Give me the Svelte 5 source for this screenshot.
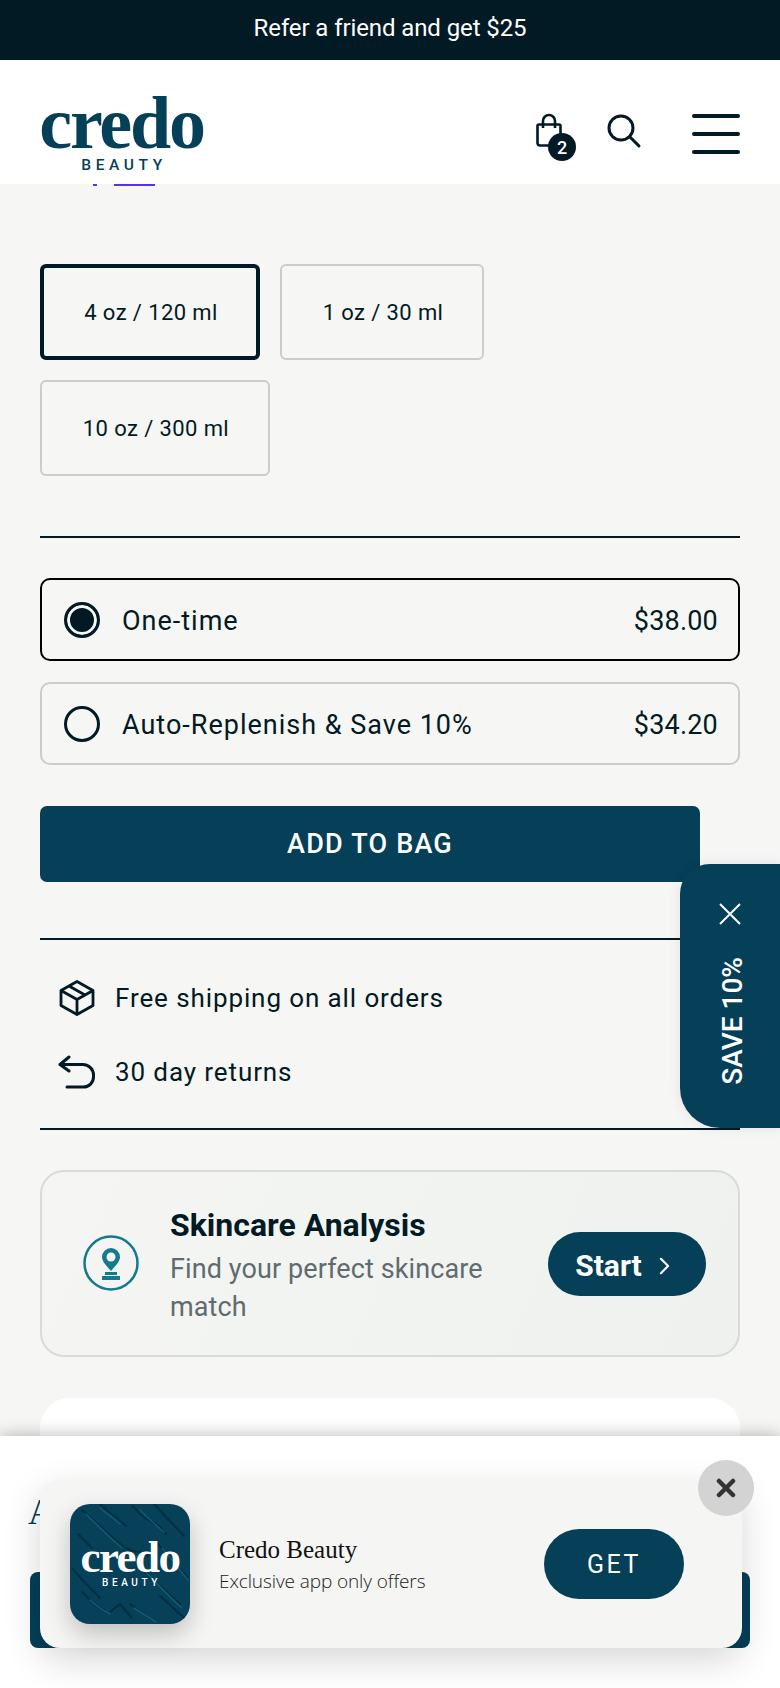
<script>
  const sizes = [
    { label: '4 oz / 120 ml', cls: 's1 selected' },
    { label: '1 oz / 30 ml', cls: 's2' },
    { label: '10 oz / 300 ml', cls: 's3' }
  ];
  const plans = [
    { label: 'One-time', price: '$38.00', active: true },
    { label: 'Auto-Replenish & Save 10%', price: '$34.20', active: false }
  ];
</script>

<div class="page">
  <div class="promo">Refer a friend and get $25</div>

  <header>
    <div class="logo">
      <span class="word">credo</span>
      <span class="sub">BEAUTY</span>
    </div>
    <div class="actions">
      <div class="bag">
        <svg width="32" height="36" viewBox="0 0 32 36" fill="none" stroke="#021a24" stroke-width="2.6">
          <path d="M4 11.5h20a1.5 1.5 0 0 1 1.5 1.5v17a2.5 2.5 0 0 1-2.5 2.5H5A2.5 2.5 0 0 1 2.5 30V13A1.5 1.5 0 0 1 4 11.5z" />
          <path d="M8 15V8a6 6 0 0 1 12 0v7" />
        </svg>
        <span class="badge">2</span>
      </div>
      <svg class="search" width="36" height="36" viewBox="0 0 36 36" fill="none" stroke="#021a24" stroke-width="3" stroke-linecap="round">
        <circle cx="15" cy="15" r="12" />
        <path d="M24 24l9 9" />
      </svg>
      <div class="burger"><i></i><i></i><i></i></div>
    </div>
  </header>

  <main>
    <div class="peek"><i></i><b></b></div>

    <div class="sizes">
      {#each sizes as s}
        <div class="size {s.cls}">{s.label}</div>
      {/each}
    </div>

    <hr class="rule first" />

    <div class="plans">
      {#each plans as p}
        <div class="plan" class:active={p.active}>
          <span class="radio" class:on={p.active}></span>
          <span class="plan-label">{p.label}</span>
          <span class="price">{p.price}</span>
        </div>
      {/each}
    </div>

    <button class="add">ADD TO BAG</button>

    <hr class="rule second" />

    <div class="perks">
      <div class="perk">
        <svg width="38" height="36" viewBox="0 0 38 36" fill="none" stroke="#021a24" stroke-width="2.8" stroke-linejoin="round">
          <path d="M19 1.5 35 10.5v15L19 34.5 3 25.5v-15z" />
          <path d="M3 10.5 19 19.5 35 10.5M19 19.5v15M11 6l16 9" />
        </svg>
        <span>Free shipping on all orders</span>
      </div>
      <div class="perk">
        <svg width="38" height="34" viewBox="0 0 38 34" fill="none" stroke="#021a24" stroke-width="3" stroke-linecap="round" stroke-linejoin="round">
          <path d="M11 2 2 9.5 11 16" />
          <path d="M3 9.5h22a10.5 10.5 0 0 1 10.5 10.5v2A10 10 0 0 1 25.5 32H9" />
        </svg>
        <span>30 day returns</span>
      </div>
    </div>

    <hr class="rule third" />

    <section class="analysis">
      <svg class="pin" width="56" height="56" viewBox="0 0 56 56" fill="none">
        <circle cx="28" cy="28" r="26.5" stroke="#147a8f" stroke-width="2.5" />
        <path d="M28 13a9 9 0 0 0-9 9c0 5 5 9 9 14 4-5 9-9 9-14a9 9 0 0 0-9-9z" fill="#147a8f" />
        <circle cx="28" cy="22" r="4.5" fill="#f3f5f3" />
        <rect x="22" y="37" width="12" height="3" fill="#147a8f" />
        <rect x="19" y="41" width="18" height="4" fill="#147a8f" />
      </svg>
      <div class="analysis-text">
        <h2>Skincare Analysis</h2>
        <p>Find your perfect skincare match</p>
      </div>
      <button class="start">
        Start
        <svg width="11" height="18" viewBox="0 0 12 20" fill="none" stroke="#fff" stroke-width="2.4" stroke-linecap="round" stroke-linejoin="round"><path d="M2 2l8 8-8 8" /></svg>
      </button>
    </section>

    <div class="white-card"></div>
  </main>

  <aside class="flyout">
    <svg width="22" height="22" viewBox="0 0 22 22" fill="none" stroke="#fff" stroke-width="2"><path d="M1 1l20 20M21 1 1 21" /></svg>
    <span>SAVE 10%</span>
  </aside>

  <div class="sheet">
    <div class="behind-title">A</div>
    <div class="behind-btn"></div>

    <div class="app-card">
      <div class="app-icon">
        <svg class="texture" width="120" height="120" viewBox="0 0 120 120" fill="none" stroke-linecap="round">
          <path d="M12 6c10 8 26 24 38 34s20 6 28 12M30 0c8 8 18 14 26 22M62 2c8 6 10 12 20 16s10 8 14 12M84 0l30 32M88 40c10 12 18 22 30 34M62 54c12 14 30 30 48 46M2 64c8 10 18 20 28 30M12 88c8 6 10 14 22 18M60 100c8 6 16 12 26 18M90 92c10 8 18 18 28 24M8 30l14 14M40 108l10-8 12 14" stroke="#022f40" stroke-width="2" />
          <path d="M16 10c10 10 22 22 36 34M70 6c8 8 14 14 24 22M92 44c10 12 16 20 26 32M66 58c14 14 28 30 46 46M20 96c6 6 12 10 20 14M64 104l22 14M30 4l20 16" stroke="#0e5c75" stroke-width="1.5" />
        </svg>
        <span class="icon-word">credo</span>
        <span class="icon-sub">BEAUTY</span>
      </div>
      <div class="app-text">
        <div class="app-name">Credo Beauty</div>
        <div class="app-desc">Exclusive app only offers</div>
      </div>
      <button class="get">GET</button>
    </div>

    <div class="close">
      <svg width="20" height="20" viewBox="0 0 20 20" fill="none" stroke="#333" stroke-width="4.5" stroke-linecap="round"><path d="M3 3l14 14M17 3 3 17" /></svg>
    </div>
  </div>
</div>

<style>
  :global(body) {
    font-family: Roboto, sans-serif;
    background: #f6f6f4;
    margin: 0;
  }

  .page {
    position: relative;
    width: 780px;
    height: 1688px;
    overflow: hidden;
    background: #f6f6f4;
    color: #021a24;
  }

  .promo {
    height: 60px;
    background: #021a24;
    color: #fff;
    font-size: 24px;
    line-height: 56px;
    text-align: center;
    letter-spacing: -0.1px;
  }

  header {
    height: 124px;
    background: #fff;
    display: flex;
    justify-content: space-between;
    padding: 0 40px;
    box-sizing: border-box;
  }

  .logo {
    display: flex;
    flex-direction: column;
    align-items: center;
    width: 163px;
    padding-top: 36px;
  }

  .word {
    font-family: "Liberation Serif", serif;
    font-weight: 700;
    font-size: 74px;
    line-height: 54px;
    letter-spacing: -2.2px;
    color: #053f58;
  }

  .sub {
    font-size: 15.5px;
    font-weight: 500;
    line-height: 15px;
    letter-spacing: 4.6px;
    margin-top: 8px;
    color: #053f58;
    padding-left: 5px;
  }

  .actions {
    display: flex;
    align-items: flex-start;
    padding-top: 52px;
  }

  .bag {
    position: relative;
    width: 32px;
    height: 36px;
    margin-top: 1px;
  }

  .badge {
    position: absolute;
    left: 13px;
    top: 20px;
    width: 28px;
    height: 28px;
    border-radius: 50%;
    background: #021a24;
    color: #fff;
    font-size: 18px;
    font-weight: 500;
    line-height: 29px;
    text-align: center;
  }

  .search {
    margin-left: 39px;
    margin-top: 1px;
  }

  .burger {
    width: 48px;
    margin-left: 50px;
    display: flex;
    flex-direction: column;
    gap: 14px;
    margin-top: 2px;
  }

  .burger i {
    display: block;
    height: 4px;
    border-radius: 2px;
    background: #021a24;
  }

  main {
    padding: 0 40px;
  }

  .peek {
    display: flex;
    height: 2px;
    padding-left: 53px;
    gap: 17px;
  }

  .peek i {
    width: 4px;
    background: #5a31f4;
  }

  .peek b {
    width: 41px;
    background: #5a31f4;
  }

  .sizes {
    display: flex;
    flex-wrap: wrap;
    gap: 20px;
    margin-top: 78px;
    max-width: 500px;
  }

  .size {
    height: 96px;
    box-sizing: border-box;
    border: 2px solid #cccccc;
    border-radius: 6px;
    display: flex;
    align-items: center;
    justify-content: center;
    padding-left: 2px;
    font-size: 22px;
    letter-spacing: 0.4px;
  }

  .s1 { width: 220px; }
  .s2 { width: 204px; }
  .s3 { width: 230px; }

  .selected {
    border: 4px solid #021a24;
  }

  .rule {
    border: 0;
    height: 2px;
    background: #021a24;
    margin: 0;
  }

  .rule.first { margin-top: 60px; }
  .rule.second { margin-top: 56px; }

  .plans {
    display: flex;
    flex-direction: column;
    gap: 21px;
    margin-top: 40px;
  }

  .plan {
    height: 83px;
    box-sizing: border-box;
    border: 2px solid #cccccc;
    border-radius: 10px;
    display: flex;
    align-items: center;
    padding: 0 20px 0 22px;
    font-size: 27px;
    letter-spacing: 1px;
  }

  .plan.active {
    border-color: #000;
  }

  .plan-label,
  .price {
    margin-top: 2px;
  }

  .radio {
    width: 36px;
    height: 36px;
    box-sizing: border-box;
    border: 3px solid #021a24;
    border-radius: 50%;
    margin-right: 22px;
  }

  .radio.on {
    background: #021a24;
    box-shadow: inset 0 0 0 3px #f6f6f4;
  }

  .price {
    margin-left: auto;
    letter-spacing: 0.2px;
  }

  .add {
    display: block;
    width: 660px;
    height: 76px;
    margin-top: 41px;
    border: 0;
    border-radius: 7px;
    background: #053f58;
    color: #fff;
    font-family: inherit;
    font-size: 27px;
    font-weight: 500;
    letter-spacing: 1.2px;
  }

  .perks {
    display: flex;
    flex-direction: column;
    gap: 37px;
    padding: 39px 0 0 18px;
    height: 188px;
    box-sizing: border-box;
  }

  .perk {
    display: flex;
    align-items: center;
    gap: 19px;
    height: 37px;
    font-size: 26px;
    letter-spacing: 0.9px;
  }

  .analysis {
    margin-top: 40px;
    height: 187px;
    box-sizing: border-box;
    border: 2px solid #d9dbd7;
    border-radius: 24px;
    background: linear-gradient(115deg, #f5f6f4, #eef1ee);
    display: flex;
    align-items: center;
    padding: 0 32px 0 41px;
  }

  .pin {
    flex: none;
    margin-right: 31px;
    margin-top: -1px;
  }

  .analysis-text {
    width: 340px;
    padding-top: 4px;
  }

  h2 {
    margin: 0;
    font-size: 32px;
    font-weight: 700;
    line-height: 38px;
  }

  .analysis-text p {
    margin: 6px 0 0;
    font-size: 27px;
    line-height: 38px;
    color: #5f6b6f;
    letter-spacing: 0.1px;
  }

  .start {
    margin-left: auto;
    width: 158px;
    height: 64px;
    border: 0;
    border-radius: 32px;
    background: #053f58;
    color: #fff;
    font-family: inherit;
    font-size: 30px;
    font-weight: 700;
    display: flex;
    align-items: center;
    justify-content: center;
    gap: 17px;
    flex: none;
    padding: 3px 9px 0 0;
    margin-top: 1px;
  }

  .white-card {
    margin-top: 41px;
    height: 120px;
    background: #fff;
    border-radius: 30px;
  }

  .flyout {
    position: absolute;
    right: 0;
    top: 864px;
    width: 100px;
    height: 264px;
    box-sizing: border-box;
    background: #053f58;
    border-radius: 30px 0 0 40px;
    box-shadow: 0 0 14px rgba(0, 0, 0, 0.08);
    display: flex;
    flex-direction: column;
    align-items: center;
    color: #fff;
    padding-top: 39px;
  }

  .flyout span {
    writing-mode: vertical-rl;
    transform: rotate(180deg);
    font-size: 28px;
    font-weight: 500;
    margin-top: 32px;
    margin-left: 5px;
    line-height: 30px;
  }

  .sheet {
    position: absolute;
    left: 0;
    right: 0;
    top: 1436px;
    bottom: 0;
    background: #fff;
    box-shadow: 0 0 16px rgba(0, 0, 0, 0.3);
  }

  .behind-title {
    position: absolute;
    left: 28px;
    top: 56px;
    font-family: "Liberation Serif", serif;
    font-size: 36px;
    line-height: 40px;
    color: #053f58;
  }

  .behind-btn {
    position: absolute;
    left: 30px;
    right: 30px;
    top: 136px;
    height: 76px;
    border-radius: 8px;
    background: #053f58;
  }

  .app-card {
    position: absolute;
    left: 40px;
    top: 44px;
    width: 702px;
    height: 168px;
    box-sizing: border-box;
    background: #f5f5f4;
    border-radius: 20px;
    box-shadow: 0 12px 36px rgba(0, 0, 0, 0.16);
    display: flex;
    align-items: center;
    padding: 0 58px 0 30px;
  }

  .app-icon {
    position: relative;
    width: 120px;
    height: 120px;
    flex: none;
    border-radius: 20px;
    background: #064059;
    box-shadow: 0 10px 24px rgba(0, 0, 0, 0.22);
    overflow: hidden;
    display: flex;
    flex-direction: column;
    align-items: center;
    padding-top: 34px;
    box-sizing: border-box;
    color: #fff;
  }

  .texture {
    position: absolute;
    left: 0;
    top: 0;
  }

  .icon-word {
    position: relative;
    font-family: "Liberation Serif", serif;
    font-weight: 700;
    font-size: 45px;
    line-height: 38px;
    letter-spacing: -1.5px;
  }

  .icon-sub {
    position: relative;
    font-size: 10px;
    font-weight: 500;
    line-height: 12px;
    letter-spacing: 3.6px;
    margin-top: 1px;
    padding-left: 3px;
  }

  .app-text {
    margin-left: 29px;
    padding-top: 3px;
  }

  .app-name {
    font-family: "Liberation Serif", serif;
    font-size: 25px;
    line-height: 30px;
    color: #111;
  }

  .app-desc {
    font-family: "Open Sans", sans-serif;
    font-weight: 300;
    font-size: 19px;
    line-height: 30px;
    margin-top: 1px;
    color: #222;
    letter-spacing: -0.1px;
  }

  .get {
    margin-left: auto;
    width: 140px;
    height: 70px;
    border: 0;
    border-radius: 35px;
    background: #053f58;
    color: #fff;
    font-family: inherit;
    font-size: 25px;
    letter-spacing: 2.5px;
  }

  .close {
    position: absolute;
    left: 698px;
    top: 24px;
    width: 56px;
    height: 56px;
    border-radius: 50%;
    background: #d3d3d3;
    display: flex;
    align-items: center;
    justify-content: center;
  }
</style>
